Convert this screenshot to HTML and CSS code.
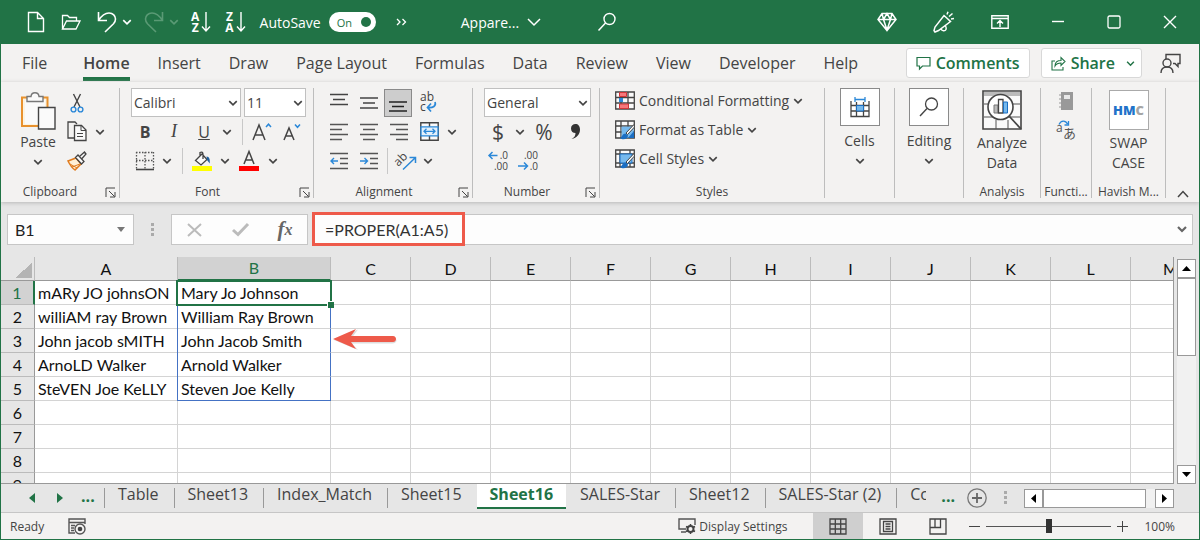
FILE: index.html
```html
<!DOCTYPE html>
<html lang="en">
<head>
<meta charset="utf-8">
<meta name="viewport" content="width=device-width, initial-scale=1">
<title>Spreadsheet</title>
<link rel="stylesheet" href="styles.css">
</head>
<body>
<svg class="defs" aria-hidden="true">
  <symbol id="chev" viewBox="0 0 8 8"><path d="M1 2.5 4 5.5 7 2.5" fill="none" stroke="currentColor" stroke-width="1.3"/></symbol>
  <symbol id="launch" viewBox="0 0 11 11"><path d="M1 10V1h9M4 4l5.500 5.500M10 5v5H5" fill="none" stroke="currentColor"/></symbol>
</svg>
<div class="window">

  <header class="titlebar">
    <div class="quick">
      <button class="tb-btn new" aria-label="New"><svg width="18" height="22" viewBox="0 0 18 22"><path d="M1.500 1.500h9l6 6v13h-15zM10.500 1.500v6h6" fill="none" stroke="currentColor" stroke-width="1.400"/></svg></button>
      <button class="tb-btn" aria-label="Open"><svg width="20" height="18" viewBox="0 0 20 18"><path d="M1.500 16V2.500h5l2 2h7V8M1.500 16 5.500 8h13.500l-4 8z" fill="none" stroke="currentColor" stroke-width="1.300"/></svg></button>
      <button class="tb-btn undo" aria-label="Undo"><svg width="20" height="22" viewBox="0 0 20 22"><path d="M1.500 1v8.500H10M1.500 9.500C5 4 8 2 12 2c4 0 6.500 3 6.500 6 0 2-.8 3.500-2 4.800L8 21" fill="none" stroke="currentColor" stroke-width="1.600"/></svg></button>
      <button class="tb-btn hist" aria-label="Undo history"><svg width="10" height="10"><use href="#chev"/></svg></button>
      <button class="tb-btn dim undo" aria-label="Redo" disabled><svg width="20" height="22" viewBox="0 0 20 22"><path d="M18.500 1v8.500H10M18.500 9.500C15 4 12 2 8 2 4 2 1.500 5 1.500 8c0 2 .8 3.500 2 4.800L12 21" fill="none" stroke="currentColor" stroke-width="1.600"/></svg></button>
      <button class="tb-btn dim hist" aria-label="Redo history" disabled><svg width="10" height="10"><use href="#chev"/></svg></button>
      <button class="tb-btn sort" aria-label="Sort A to Z"><span class="stack"><b>A</b><b>Z</b></span><svg width="10" height="22" viewBox="0 0 10 22"><path d="M5 1v19M1 15.500l4 4.500 4-4.500" fill="none" stroke="currentColor" stroke-width="1.400"/></svg></button>
      <button class="tb-btn sort" aria-label="Sort Z to A"><span class="stack"><b>Z</b><b>A</b></span><svg width="10" height="22" viewBox="0 0 10 22"><path d="M5 1v19M1 15.500l4 4.500 4-4.500" fill="none" stroke="currentColor" stroke-width="1.400"/></svg></button>
      <label class="autosave">AutoSave <span class="switch"><input type="checkbox" checked><span>On</span></span></label>
      <button class="tb-btn overflow" aria-label="More commands"><svg width="11" height="8" viewBox="0 0 11 8"><path d="M1 1l3 3-3 3M6.500 1l3 3-3 3" fill="none" stroke="currentColor" stroke-width="1.300"/></svg></button>
      <button class="tb-btn filename">Appare... <svg width="14" height="8" viewBox="0 0 14 8"><path d="M1 1l6 6 6-6" fill="none" stroke="currentColor" stroke-width="1.500"/></svg></button>
      <button class="tb-btn" aria-label="Search"><svg width="20" height="20" viewBox="0 0 20 20"><circle cx="12.500" cy="7" r="5.500" fill="none" stroke="currentColor" stroke-width="1.400"/><path d="M8.500 11 1.500 18.500" stroke="currentColor" stroke-width="1.500"/></svg></button>
    </div>
    <div class="win-tools">
      <button class="tb-btn" aria-label="Premium"><svg width="20" height="20" viewBox="0 0 20 20"><path d="M5 1.500h10l4 6L10 18.500 1 7.500zM1 7.500h18M5 1.500 6.500 7.500 10 18l3.500-10.500L15 1.500M6.500 7.500 10 1.500l3.500 6" fill="none" stroke="currentColor" stroke-width="1.500"/></svg></button>
      <button class="tb-btn" aria-label="Coming soon"><svg width="22" height="22" viewBox="0 0 22 22"><path d="M11 4.500l6.500 6L5.500 19.500l-3.500 1.500L1 19.500l1-3.500zM8 18c1 2 4 2.500 5 .5.500-1 .3-2-.5-3.500M14 3.500 15 .8M16 5.500l3.500-3M18 8l3-.5" fill="none" stroke="currentColor" stroke-width="1.500"/></svg></button>
      <button class="tb-btn" aria-label="Ribbon display"><svg width="18" height="14" viewBox="0 0 18 14"><path d="M.8.800h16.400v12.400H.8zM.8 3.500h16.400M9 12V6M6 8.500 9 5.500l3 3" fill="none" stroke="currentColor" stroke-width="1.400"/></svg></button>
      <button class="tb-btn win" aria-label="Minimize"><svg width="14" height="14" viewBox="0 0 14 14"><path d="M1 6.500h12" stroke="currentColor" stroke-width="1.400"/></svg></button>
      <button class="tb-btn win" aria-label="Maximize"><svg width="14" height="14" viewBox="0 0 14 14"><rect x="1" y="1" width="12" height="12" rx="1.500" fill="none" stroke="currentColor" stroke-width="1.300"/></svg></button>
      <button class="tb-btn win" aria-label="Close"><svg width="14" height="14" viewBox="0 0 14 14"><path d="M1 1l12 12M13 1 1 13" stroke="currentColor" stroke-width="1.400"/></svg></button>
    </div>
  </header>

  <div class="menubar">
    <nav class="tabs">
      <a href="#file" class="file">File</a><a href="#home" class="active">Home</a><a href="#insert">Insert</a><a href="#draw">Draw</a><a href="#layout">Page Layout</a><a href="#formulas">Formulas</a><a href="#data">Data</a><a href="#review">Review</a><a href="#view">View</a><a href="#developer">Developer</a><a href="#help">Help</a>
    </nav>
    <div class="menu-actions">
      <button class="pill"><svg width="15" height="14" viewBox="0 0 15 14"><path d="M1 1.500h13v8.500H6.500l-3 3V10H1z" fill="none" stroke="currentColor" stroke-width="1.200"/></svg>Comments</button>
      <button class="pill share"><svg width="15" height="15" viewBox="0 0 15 15"><path d="M4 5H1v9h11v-3M4 10c0-4 2.500-5.500 6-5.500V1.500l4 4-4 4V7C7.500 7 5.500 7.500 4 10z" fill="none" stroke="currentColor" stroke-width="1.100"/></svg>Share<svg class="caret" width="9" height="9"><use href="#chev"/></svg></button>
      <button class="plain" aria-label="Feedback"><svg width="21" height="21" viewBox="0 0 21 21"><path d="M6 6V1.500h14v9h-2v3l-3-3h-2M1 20c0-4 2.500-6 6-6s6 2 6 6" fill="none" stroke="currentColor" stroke-width="1.400"/><circle cx="7" cy="10" r="4" fill="none" stroke="currentColor" stroke-width="1.400"/></svg></button>
    </div>
  </div>

  <main class="ribbon">
    <section class="group clipboard">
      <div class="body">
        <button class="big"><svg width="36" height="38" viewBox="0 0 36 38"><path d="M2 5.500h25.500V34H2z" fill="#fdf3e0" stroke="#e8912d" stroke-width="2"/><path d="M5 8h20v24H5z" fill="#fafafa"/><path d="M7 4.500h4c.5-5 7.500-5 8 0h4v5H7z" fill="#fafafa" stroke="#777" stroke-width="1.400"/><path d="M18.500 15.500H35V37H18.500z" fill="#fafafa" stroke="#444" stroke-width="1.400"/></svg><span>Paste</span><svg class="chev"><use href="#chev"/></svg></button>
        <div class="rows clip-rows">
          <div class="row"><button class="tool w30" aria-label="Cut"><svg width="14" height="20" viewBox="0 0 14 20"><path d="M3.500 1 10 14M10.500 1 4 14" fill="none" stroke="#444" stroke-width="1.400"/><circle cx="3.500" cy="16.500" r="2.400" fill="none" stroke="#2b88d8" stroke-width="1.400"/><circle cx="10.500" cy="16.500" r="2.400" fill="none" stroke="#2b88d8" stroke-width="1.400"/></svg></button></div>
          <div class="row"><button class="tool w30" aria-label="Copy"><svg width="20" height="21" viewBox="0 0 20 21"><path d="M8 1H1v16h6M1 1h7l2 2" fill="none" stroke="#444" stroke-width="1.300"/><path d="M7.500 4.500h7l4.500 4.500v10.500H7.500z" fill="#fafafa" stroke="#444" stroke-width="1.300"/><path d="M14 5v4.500h5M10 12.500h6M10 15.500h6" fill="none" stroke="#444"/></svg></button><button class="tool w16" aria-label="Copy options"><svg class="chev"><use href="#chev"/></svg></button></div>
          <div class="row"><button class="tool w30" aria-label="Format painter"><svg width="20" height="20" viewBox="0 0 20 20"><path d="M1 10 9 7l5 6-6 6C5 17 3 14 1 10z" fill="#fff0d6" stroke="#e07b1e" stroke-width="1.500"/><path d="M3 13l7 4M5 16l8-3" stroke="#e07b1e"/><path d="M8.500 6.500 11 4l6 6.500-2.500 2.500zM13 5l4.500-4L19 3l-4 4.500" fill="#fafafa" stroke="#444" stroke-width="1.300"/></svg></button></div>
        </div>
      </div>
      <h2>Clipboard</h2><button class="launch" aria-label="Clipboard options"><svg><use href="#launch"/></svg></button>
    </section>

    <section class="group font">
      <div class="body"><div class="rows">
        <div class="row gap2"><span class="combo face"><select aria-label="Font"><option>Calibri</option></select><svg class="chev"><use href="#chev"/></svg></span><span class="combo size"><select aria-label="Font size"><option>11</option></select><svg class="chev"><use href="#chev"/></svg></span></div>
        <div class="row"><button class="tool w28 bold">B</button><button class="tool w30 italic">I</button><button class="tool w30 under">U</button><button class="tool w16" aria-label="Underline options"><svg class="chev"><use href="#chev"/></svg></button><i class="sep"></i>
          <button class="tool w30" aria-label="Grow font"><svg width="20" height="20" viewBox="0 0 20 20"><path d="M1 18 7 3l6 15M3 13h8" fill="none" stroke="#444" stroke-width="1.500"/><path d="M14 5l2.500-2.800L19 5" fill="none" stroke="#2b88d8" stroke-width="1.500"/></svg></button><button class="tool w30" aria-label="Shrink font"><svg width="18" height="20" viewBox="0 0 18 20"><path d="M1 18 6 6l5 12M3 14h6" fill="none" stroke="#444" stroke-width="1.500"/><path d="M12 2.500l2.500 2.800L17 2.500" fill="none" stroke="#2b88d8" stroke-width="1.500"/></svg></button></div>
        <div class="row"><button class="tool w28" aria-label="Borders"><svg width="20" height="20" viewBox="0 0 20 20"><path d="M1 1.500h18M1 9.500h18M1.500 1v17M10 1v17M18.500 1v17" fill="none" stroke="#555" stroke-dasharray="1.500 1.500" stroke-width="1.300"/><path d="M1 18.500h18" stroke="#444" stroke-width="1.600"/></svg></button><button class="tool w16" aria-label="Border options"><svg class="chev"><use href="#chev"/></svg></button><i class="sep"></i>
          <button class="tool w30" aria-label="Fill color"><svg width="20" height="20" viewBox="0 0 20 20"><path d="M3.500 9.500 10 3l5 5.500-6 5.500zM8 5V1.500c2-1 3 0 3 2V8" fill="#fafafa" stroke="#444" stroke-width="1.300"/><path d="M14.500 5.500c3 0 3.500 3 3.200 7L15 9z" fill="#1f5f9e"/><path d="M0 15h20v5H0z" fill="#ff0"/></svg></button><button class="tool w16" aria-label="Fill options"><svg class="chev"><use href="#chev"/></svg></button><button class="tool w32" aria-label="Font color"><svg width="20" height="22" viewBox="0 0 20 22"><path d="M5 14 10 1.500 15 14M7 10h6" fill="none" stroke="#444" stroke-width="1.500"/><path d="M0 16h20v5H0z" fill="#f00"/></svg></button><button class="tool w16" aria-label="Font color options"><svg class="chev"><use href="#chev"/></svg></button></div>
      </div></div>
      <h2>Font</h2><button class="launch" aria-label="Font options"><svg><use href="#launch"/></svg></button>
    </section>

    <section class="group align">
      <div class="body"><div class="rows">
        <div class="row"><button class="tool w30" aria-label="Top align"><svg width="18" height="18" viewBox="0 0 18 18"><path d="M0 .5h18M3 5.500h12M0 10.500h18" stroke="#444" stroke-width="1.300"/></svg></button><button class="tool w30" aria-label="Middle align"><svg width="18" height="18" viewBox="0 0 18 18"><path d="M0 4h18M3 9h12M0 14h18" stroke="#444" stroke-width="1.300"/></svg></button><button class="tool w28 on" aria-label="Bottom align"><svg width="18" height="18" viewBox="0 0 18 18"><path d="M0 8h18M3 12.500h12M0 17h18" stroke="#222" stroke-width="1.400"/></svg></button>
          <button class="tool w32" aria-label="Wrap text"><svg width="20" height="20" viewBox="0 0 20 20"><text x="2" y="8" class="ab">ab</text><text x="2" y="18" class="ab">c</text><path d="M17 9c1.500 4-2 6-7 5.500M13 10.500 9.500 14.500l3.500 4" fill="none" stroke="#2b88d8" stroke-width="1.700"/></svg></button></div>
        <div class="row"><button class="tool w30" aria-label="Align left"><svg width="18" height="18" viewBox="0 0 18 18"><path d="M0 1.500h18M0 6.500h12M0 11.500h18M0 16.500h12" stroke="#555" stroke-width="1.300"/></svg></button><button class="tool w30" aria-label="Center"><svg width="18" height="18" viewBox="0 0 18 18"><path d="M0 1.500h18M3 6.500h12M0 11.500h18M3 16.500h12" stroke="#555" stroke-width="1.300"/></svg></button><button class="tool w30" aria-label="Align right"><svg width="18" height="18" viewBox="0 0 18 18"><path d="M0 1.500h18M6 6.500h12M0 11.500h18M6 16.500h12" stroke="#555" stroke-width="1.300"/></svg></button>
          <button class="tool w30" aria-label="Merge"><svg width="19" height="19" viewBox="0 0 19 19"><path d="M.8.800h17.400v17.400H.8zM9.500 1v4M9.500 14v4" fill="#fafafa" stroke="#444" stroke-width="1.400"/><path d="M1 4.800h17v9H1z" fill="#e3f0fb" stroke="#2b88d8" stroke-width="1.300"/><path d="M4 9.300h11M6.500 6.800 4 9.300l2.500 2.500M12.500 6.800 15 9.300l-2.500 2.500" fill="none" stroke="#2b88d8" stroke-width="1.300"/></svg></button><button class="tool w16" aria-label="Merge options"><svg class="chev"><use href="#chev"/></svg></button></div>
        <div class="row"><button class="tool w30" aria-label="Decrease indent"><svg width="18" height="18" viewBox="0 0 18 18"><path d="M0 1.500h18M10 6.500h8M10 11.500h8M0 16.500h18" stroke="#555" stroke-width="1.300"/><path d="M8 9H1M4 6 1 9l3 3" fill="none" stroke="#2b88d8" stroke-width="1.400"/></svg></button><button class="tool w30" aria-label="Increase indent"><svg width="18" height="18" viewBox="0 0 18 18"><path d="M0 1.500h18M10 6.500h8M10 11.500h8M0 16.500h18" stroke="#555" stroke-width="1.300"/><path d="M0 9h7.500M4.500 6l3 3-3 3" fill="none" stroke="#2b88d8" stroke-width="1.400"/></svg></button><i class="sep tight"></i>
          <button class="tool w28" aria-label="Orientation"><svg width="22" height="20" viewBox="0 0 22 20"><text x="-1" y="12" class="ab" transform="rotate(-45 6 9)">ab</text><path d="M8 18.500 20 7M14.500 6.500H20.500V12" fill="none" stroke="#2b88d8" stroke-width="1.500"/></svg></button><button class="tool w16" aria-label="Orientation options"><svg class="chev"><use href="#chev"/></svg></button></div>
      </div></div>
      <h2>Alignment</h2><button class="launch" aria-label="Alignment options"><svg><use href="#launch"/></svg></button>
    </section>

    <section class="group number">
      <div class="body"><div class="rows">
        <div class="row"><span class="combo format"><select aria-label="Number format"><option>General</option></select><svg class="chev"><use href="#chev"/></svg></span></div>
        <div class="row"><button class="tool w28 sym">$</button><button class="tool w16" aria-label="Currency options"><svg class="chev"><use href="#chev"/></svg></button><button class="tool w32 sym">%</button><button class="tool w30" aria-label="Comma style"><svg width="11" height="17" viewBox="0 0 11 17"><path d="M1.500 16c3-1.500 4-3.500 4-6C3 10 1 8.500 1 5.500S3 1 5.500 1 10 3 10 6.500C10 11 7 15 1.500 16z" fill="#333"/></svg></button></div>
        <div class="row"><button class="tool w28" aria-label="Increase decimal"><svg width="20" height="22" viewBox="0 0 20 22"><text x="20" y="9" text-anchor="end" class="dec">.0</text><text x="20" y="20" text-anchor="end" class="dec">.00</text><path d="M9.500 5.500H1M4.500 2 1 5.500 4.500 9" fill="none" stroke="#2b88d8" stroke-width="1.500"/></svg></button><button class="tool w32" aria-label="Decrease decimal"><svg width="20" height="22" viewBox="0 0 20 22"><text x="20" y="9" text-anchor="end" class="dec">.00</text><text x="20" y="20" text-anchor="end" class="dec">.0</text><path d="M0 16h9.500M6 12.500l3.500 3.500L6 19.500" fill="none" stroke="#2b88d8" stroke-width="1.500"/></svg></button></div>
      </div></div>
      <h2>Number</h2><button class="launch" aria-label="Number options"><svg><use href="#launch"/></svg></button>
    </section>

    <section class="group styles">
      <div class="body"><div class="rows">
        <button class="line"><svg width="20" height="20" viewBox="0 0 20 20"><path d="M.7 1h18.600v17H.7zM1 6.500h18M1 12h18M6 1v17M13 1v17" fill="#fafafa" stroke="#444" stroke-width="1.300"/><path d="M4.500 1.500h7v4h-7zM4.500 13h9v4.500h-9z" fill="#f4787c" stroke="#d13438"/><path d="M4 7h4v4H4z" fill="#2b88d8"/></svg>Conditional Formatting<svg class="chev"><use href="#chev"/></svg></button>
        <button class="line"><svg width="20" height="20" viewBox="0 0 20 20"><path d="M.7 1h18.600v17H.7zM1 6h18M1 12h18M6 1v17M13 1v17" fill="#fafafa" stroke="#444" stroke-width="1.300"/><path d="M6.600 6.600h12v11H6.600z" fill="#76b9ed"/><path d="M13 18h6v-7z" fill="#1b6ec2"/><path d="M19 4.500 11 13l1.500 1.500L19.500 7z" fill="#fff" stroke="#444"/><path d="M10.500 13.500c-3 0-3 3-5.500 4.500 3 2.500 8 1 8-2.500z" fill="#1b6ec2"/></svg>Format as Table<svg class="chev"><use href="#chev"/></svg></button>
        <button class="line"><svg width="20" height="20" viewBox="0 0 20 20"><path d="M.7 1h18.600v17H.7zM1 5h18M1 14h18M5 1v17M15 1v17" fill="#fafafa" stroke="#444" stroke-width="1.300"/><path d="M5 5h12v9H5z" fill="#76b9ed" stroke="#1b6ec2"/><path d="M19 4.500 11 13l1.500 1.500L19.500 7z" fill="#fff" stroke="#444"/><path d="M10.500 13.500c-3 0-3 3-5.500 4.500 3 2.500 8 1 8-2.500z" fill="#1b6ec2"/></svg>Cell Styles<svg class="chev"><use href="#chev"/></svg></button>
      </div></div>
      <h2>Styles</h2>
    </section>

    <section class="group">
      <div class="body"><button class="big"><span class="tile"><svg width="20" height="22" viewBox="0 0 20 22"><path d="M1 5v15.500h18V5M1 9.500h18M1 15h18M6.500 6v14M13.500 6v14" fill="none" stroke="#444" stroke-width="1.300"/><path d="M6.500 9.500h7V15h-7z" fill="#76b9ed" stroke="#1b6ec2"/><path d="M5 1v5M15 1v5M5 3.500h10" fill="none" stroke="#2b88d8" stroke-width="1.300"/></svg></span><span>Cells</span><svg class="chev"><use href="#chev"/></svg></button></div>
    </section>
    <section class="group">
      <div class="body"><button class="big"><span class="tile"><svg width="20" height="20" viewBox="0 0 20 20"><circle cx="12.500" cy="7" r="6" fill="none" stroke="#444" stroke-width="1.300"/><path d="M8 11.500 1 19" stroke="#444" stroke-width="1.400"/></svg></span><span>Editing</span><svg class="chev"><use href="#chev"/></svg></button></div>
    </section>
    <section class="group">
      <div class="body"><button class="big two"><svg width="40" height="40" viewBox="0 0 40 40"><path d="M1 1h38v38H1z" fill="#fafafa" stroke="#444" stroke-width="1.600"/><path d="M2 2h36v4H2z" fill="#bbb"/><path d="M2 14h36M2 27h36M14 30v9M26 30v9" stroke="#555"/><circle cx="18.500" cy="17" r="12.500" fill="#fff" stroke="#444" stroke-width="1.600"/><path d="M12 15h4v8h-4z" fill="#bbb" stroke="#777"/><path d="M16.500 9.500h4.500V23h-4.500z" fill="#fff" stroke="#444" stroke-width="1.300"/><path d="M21.500 12h4v11h-4z" fill="#76b9ed" stroke="#1b6ec2"/><path d="M27.500 26.500 39 39" stroke="#444" stroke-width="1.800"/></svg><span>Analyze<br>Data</span></button></div>
      <h2>Analysis</h2>
    </section>
    <section class="group func">
      <div class="body"><div class="rows">
        <button class="line" aria-label="Reference"><svg width="16" height="20" viewBox="0 0 16 20"><path d="M3 1h12v18H3z" fill="#999"/><path d="M1 4h2M1 8h2M1 12h2M1 16h2" stroke="#999"/><path d="M6 4h6v4H6z" fill="#e8e8e8"/></svg></button>
        <button class="line" aria-label="Translate"><svg width="20" height="20" viewBox="0 0 20 20"><text x="0" y="12" class="lat">a</text><text x="7" y="18" class="cjk">あ</text><path d="M3 4.500C5 0 9.500 0 11.500 4M12.500 1v4h-4" fill="none" stroke="#2b88d8" stroke-width="1.300"/></svg></button>
      </div></div>
      <h2>Functi...</h2>
    </section>
    <section class="group">
      <div class="body"><button class="big two"><span class="hmc">HM<i>C</i></span><span>SWAP<br>CASE</span></button></div>
      <h2>Havish M...</h2>
    </section>
    <button class="collapse" aria-label="Collapse ribbon"><svg width="12" height="8" viewBox="0 0 12 8"><path d="M1 7l5-5.500L11 7" fill="none" stroke="#444" stroke-width="1.500"/></svg></button>
  </main>

  <div class="formula-bar">
    <label class="name-box"><input value="B1" aria-label="Name box"><svg width="8" height="5" viewBox="0 0 8 5"><path d="M0 0h8L4 5z" fill="#777"/></svg></label>
    <span class="dots"></span>
    <div class="fx-tools">
      <button aria-label="Cancel"><svg width="16" height="14" viewBox="0 0 16 14"><path d="M1 1l13 12M14 1 1 13" stroke="#bbb" stroke-width="2"/></svg></button>
      <button aria-label="Enter"><svg width="17" height="13" viewBox="0 0 17 13"><path d="M1 7l5 4.500L16 1" fill="none" stroke="#bbb" stroke-width="3"/></svg></button>
      <button class="fx">f<sub>x</sub></button>
    </div>
    <div class="formula"><input value="=PROPER(A1:A5)" aria-label="Formula"><span class="callout"></span><svg width="10" height="7" viewBox="0 0 10 7"><path d="M1 1l4 4 4-4" fill="none" stroke="#666" stroke-width="2.200"/></svg></div>
  </div>

  <div class="sheet">
    <div class="grid-area">
      <table>
        <colgroup><col class="c-head"><col class="c-a"><col class="c-b"><col span="10" class="c"><col class="c"></colgroup>
        <thead><tr><th class="corner"></th><th>A</th><th class="sel">B</th><th>C</th><th>D</th><th>E</th><th>F</th><th>G</th><th>H</th><th>I</th><th>J</th><th>K</th><th>L</th><th>M</th></tr></thead>
        <tbody>
          <tr><th class="sel">1</th><td>mARy JO johnsON</td><td class="spill current">Mary Jo Johnson<span class="cursor"></span></td><td></td><td></td><td></td><td></td><td></td><td></td><td></td><td></td><td></td><td></td><td></td></tr>
          <tr><th>2</th><td>williAM ray Brown</td><td class="spill">William Ray Brown</td><td></td><td></td><td></td><td></td><td></td><td></td><td></td><td></td><td></td><td></td><td></td></tr>
          <tr><th>3</th><td>John jacob sMITH</td><td class="spill">John Jacob Smith</td><td class="pointer"><svg width="66" height="24" viewBox="0 0 66 24"><path d="M2 12 26 1.500 20 9.500h40c6 0 6 6 0 6H20L26 22z" fill="#aaa" opacity=".4"/><path d="M1 11 24 1l-5 7h42c4 0 4 6 0 6H19l5 7z" fill="#ee5a4a"/></svg></td><td></td><td></td><td></td><td></td><td></td><td></td><td></td><td></td><td></td><td></td></tr>
          <tr><th>4</th><td>ArnoLD Walker</td><td class="spill">Arnold Walker</td><td></td><td></td><td></td><td></td><td></td><td></td><td></td><td></td><td></td><td></td><td></td></tr>
          <tr><th>5</th><td>SteVEN Joe KeLLY</td><td class="spill last">Steven Joe Kelly</td><td></td><td></td><td></td><td></td><td></td><td></td><td></td><td></td><td></td><td></td><td></td></tr>
          <tr><th>6</th><td></td><td></td><td></td><td></td><td></td><td></td><td></td><td></td><td></td><td></td><td></td><td></td><td></td></tr>
          <tr><th>7</th><td></td><td></td><td></td><td></td><td></td><td></td><td></td><td></td><td></td><td></td><td></td><td></td><td></td></tr>
          <tr><th>8</th><td></td><td></td><td></td><td></td><td></td><td></td><td></td><td></td><td></td><td></td><td></td><td></td><td></td></tr>
          <tr><th>9</th><td></td><td></td><td></td><td></td><td></td><td></td><td></td><td></td><td></td><td></td><td></td><td></td><td></td></tr>
        </tbody>
      </table>
    </div>
    <div class="vscroll">
      <button aria-label="Scroll up"><svg width="9" height="5" viewBox="0 0 9 5"><path d="M0 5h9L4.500 0z"/></svg></button>
      <span class="thumb"></span><span class="track"></span>
      <button aria-label="Scroll down"><svg width="9" height="5" viewBox="0 0 9 5"><path d="M0 0h9L4.500 5z"/></svg></button>
    </div>
  </div>

  <div class="sheet-tabs">
    <div class="nav">
      <button aria-label="Previous sheet"><svg width="6" height="10" viewBox="0 0 6 10"><path d="M6 0v10L0 5z"/></svg></button>
      <button aria-label="Next sheet"><svg width="6" height="10" viewBox="0 0 6 10"><path d="M0 0v10l6-5z"/></svg></button>
      <button class="ell">...</button>
    </div>
    <div class="list">
      <button>Table</button><button>Sheet13</button><button>Index_Match</button><button>Sheet15</button><button class="active">Sheet16</button><button>SALES-Star</button><button>Sheet12</button><button>SALES-Star (2)</button><button class="cut">Co</button>
    </div>
    <button class="ell more">...</button>
    <button class="add" aria-label="New sheet"><svg width="20" height="20" viewBox="0 0 20 20"><circle cx="10" cy="10" r="9.200" fill="none" stroke="#777" stroke-width="1.300"/><path d="M10 5v10M5 10h10" stroke="#666" stroke-width="1.800"/></svg></button>
    <span class="dots"></span>
    <div class="hscroll">
      <button aria-label="Scroll left"><svg width="5" height="9" viewBox="0 0 5 9"><path d="M5 0v9L0 4.500z"/></svg></button>
      <span class="thumb"></span><span class="track"></span>
      <button aria-label="Scroll right"><svg width="5" height="9" viewBox="0 0 5 9"><path d="M0 0v9l5-4.500z"/></svg></button>
    </div>
  </div>

  <footer class="status">
    <span>Ready</span>
    <button class="macro" aria-label="Record macro"><svg width="18" height="17" viewBox="0 0 18 17"><path d="M17 6V1H1v14h6M1 4.500h16M3 7.500h4M3 10h3M3 12.500h3" fill="none" stroke="#555" stroke-width="1.400"/><circle cx="12" cy="11" r="5" fill="#f3f2f1" stroke="#555" stroke-width="1.400"/><circle cx="12" cy="11" r="2.300" fill="#444"/></svg></button>
    <button class="display"><svg width="18" height="16" viewBox="0 0 18 16"><path d="M17 7V1H1v10h7M3 14h5" fill="none" stroke="#555" stroke-width="1.400"/><circle cx="12.500" cy="11" r="3" fill="none" stroke="#444" stroke-width="2"/><path d="M12.500 6v2M12.500 14v2M8 8.500l2 1M15 12.500l2 1M8 13.500l2-1M15 9.500l2-1" stroke="#444" stroke-width="1.500"/></svg>Display Settings</button>
    <div class="views">
      <button class="on" aria-label="Normal view"><svg width="18" height="17" viewBox="0 0 18 17"><path d="M1 1h16v15H1zM1 6h16M1 11h16M6.300 1v15M11.700 1v15" fill="none" stroke="#444" stroke-width="1.300"/></svg></button>
      <button aria-label="Page layout view"><svg width="18" height="17" viewBox="0 0 18 17"><path d="M1 1h16v15H1zM4.500 3.500h9v10h-9zM6.500 6h5M6.500 8.500h5M6.500 11h5" fill="none" stroke="#444" stroke-width="1.300"/></svg></button>
      <button aria-label="Page break view"><svg width="18" height="17" viewBox="0 0 18 17"><path d="M1 1h16v15H1zM1 9.500h10.500V1M6 1v8.500" fill="none" stroke="#444" stroke-width="1.300"/></svg></button>
    </div>
    <div class="zoom"><button aria-label="Zoom out"><svg width="11" height="11" viewBox="0 0 11 11"><path d="M0 5.500h11" stroke="#444"/></svg></button><input type="range" min="0" max="100" value="50" aria-label="Zoom"><button aria-label="Zoom in"><svg width="11" height="11" viewBox="0 0 11 11"><path d="M0 5.500h11M5.500 0v11" stroke="#444"/></svg></button><span class="pctv">100%</span></div>
  </footer>
</div>
</body>
</html>
```
FILE: styles.css
```css
* { box-sizing: border-box; }
body {
  margin: 0;
  font-family: "Open Sans", "Noto Sans", sans-serif;
  font-size: 14px;
  color: #444;
}
button, input, select { font: inherit; color: inherit; margin: 0; padding: 0; border: 0; background: none; border-radius: 0; }
button { display: inline-flex; align-items: center; justify-content: center; }
svg { flex: none; display: block; overflow: visible; }
h2 { margin: 0; font-weight: 400; }
.defs { position: absolute; width: 0; height: 0; }

.window {
  display: flex;
  flex-direction: column;
  height: 100vh;
  min-height: 480px;
  border: 1px solid #217346;
  border-top: 0;
  background: #e6e6e6;
  overflow: hidden;
}

/* title bar */
.titlebar {
  display: flex;
  justify-content: space-between;
  align-items: center;
  height: 44px;
  flex: none;
  padding: 0 22px 0 26px;
  background: #217346;
  color: #fff;
}
.quick, .win-tools { display: flex; align-items: center; }
.quick .tb-btn { margin-right: 16px; }
.quick .undo { margin-right: 5px; }
.quick .hist { margin-right: 12px; }
.quick .dim { color: #5a9a75; }
.quick .sort { margin-right: 14px; gap: 2px; }
.stack { display: grid; font-size: 12px; line-height: 11px; }
.win-tools { gap: 36px; }
.win { margin-left: 6px; }
.autosave { display: flex; align-items: center; gap: 8px; margin-right: 20px; }
.switch {
  position: relative;
  display: inline-flex;
  align-items: center;
  width: 47px;
  height: 20px;
  padding-left: 8px;
  border-radius: 10px;
  background: #fff;
  color: #217346;
  font-size: 11px;
}
.switch input {
  position: absolute;
  right: 5px;
  width: 10px;
  height: 10px;
  appearance: none;
  border-radius: 50%;
  background: #217346;
}
.quick .overflow { margin-right: 54px; }
.quick .filename { margin-right: 56px; gap: 8px; }

/* menu tabs */
.menubar { display: flex; justify-content: space-between; background: #f3f2f1; height: 38px; flex: none; padding: 0 18px 0 21px; }
.tabs { display: flex; align-items: flex-start; gap: 28px; padding-top: 6px; font-size: 16px; }
.tabs a { color: #444; text-decoration: none; line-height: 27px; border-bottom: 4px solid transparent; white-space: nowrap; }
.tabs .file { margin-right: 8px; }
.tabs .active { font-weight: 600; border-color: #217346; }
.menu-actions { display: flex; align-items: center; gap: 11px; }
.pill {
  gap: 5px;
  height: 30px;
  padding: 0 9px;
  border: 1px solid #d8d8d8;
  border-radius: 3px;
  background: #fff;
  color: #217346;
  font-size: 16px;
  font-weight: 600;
}
.pill .caret { margin-left: 6px; }
.pill.share { padding: 0 6px 0 9px; }
.plain { margin-left: 7px; }

/* ribbon */
.ribbon {
  display: grid;
  grid-template-columns: 119px 194px 159px 127px 225px 70px 69px 77px 51px 74px 1fr;
  padding-top: 6px;
  height: 120px;
  flex: none;
  background: #f3f2f1;
  box-shadow: 0 1px 4px #b8b8b8;
}
.group {
  position: relative;
  display: flex;
  flex-direction: column;
  justify-content: space-between;
  height: 110px;
  border-right: 1px solid #bdbdbd;
}
.group h2 { font-size: 12px; line-height: 12px; text-align: center; white-space: nowrap; }
.group .launch { position: absolute; right: 3px; bottom: 0; }
.launch svg { width: 11px; height: 11px; }
.body { display: flex; justify-content: center; flex: 1; }
.font .body, .align .body, .number .body, .styles .body, .clipboard .body { justify-content: flex-start; }
.font .body { padding-left: 11px; }
.align .body { padding-left: 10px; }
.number .body { padding-left: 11px; }
.styles .body { padding-left: 15px; }
.clipboard .body { padding-left: 19px; }
.clipboard h2 { padding-right: 20px; }
.font h2, .align h2, .number h2 { padding-right: 18px; }
.rows { display: flex; flex-direction: column; }
.row { display: flex; align-items: center; height: 29px; }
.gap2 { gap: 3px; }
.chev { width: 10px; height: 10px; }
.tool { height: 28px; }
.w16 { width: 16px; }
.w28 { width: 28px; }
.w30 { width: 30px; }
.w32 { width: 32px; }
.on { background: #cdcdcd; border: 1px solid #8a8a8a; }
.bold { font-weight: 700; font-size: 16px; }
.italic { font: italic 18px "Liberation Serif", serif; }
.under { text-decoration: underline; font-size: 16px; }
.sep { width: 1px; height: 26px; margin: 0 4px 0 7px; background: #c8c8c8; }
.sep.tight { margin: 0 4px 0 3px; }
.sym { font-size: 21px; }
.ab { font-size: 12px; fill: #444; }
.dec { font-size: 10px; fill: #444; }
.lat { font-size: 12px; fill: #555; }
.cjk { font: 13px "Noto Sans CJK JP", sans-serif; fill: #555; }
.combo { position: relative; display: flex; align-items: center; height: 29px; background: #fff; border: 1px solid #c0c0c0; }
.combo select { appearance: none; width: 100%; padding-left: 2px; }
.combo .chev { position: absolute; right: 2px; pointer-events: none; }
.face { width: 110px; }
.size { width: 62px; }
.format { width: 107px; }
.clip-rows { margin-left: 6px; }
.big { flex-direction: column; justify-content: flex-start; line-height: 20px; white-space: nowrap; }
.big .chev { margin-top: 5px; }
.clipboard .big { padding-top: 4px; gap: 2px; }
.clipboard .big .chev { margin-top: 3px; }
.tile { display: flex; align-items: center; justify-content: center; width: 40px; height: 38px; margin-bottom: 5px; background: #fff; border: 1px solid #8a8a8a; }
.two { padding-top: 2px; gap: 3px; }
.hmc { display: flex; align-items: center; justify-content: center; width: 40px; height: 40px; background: #fff; border: 1px solid #aaa; font-size: 13px; font-weight: 800; color: #2173c9; }
.hmc i { font-style: normal; color: #a5a5a5; }
.line { justify-content: flex-start; height: 29px; margin-top: -2px; margin-bottom: 2px; gap: 4px; white-space: nowrap; }
.func .line { justify-content: center; }
.collapse { align-self: end; padding-bottom: 4px; }

/* formula bar */
.formula-bar { display: flex; align-items: center; flex: none; height: 55px; padding: 0 6px; font-family: Lato, "Open Sans", sans-serif; font-size: 16px; color: #333; }
.formula-bar > div, .name-box { display: flex; align-items: center; height: 31px; background: #fdfdfd; border: 1px solid #c6c6c6; }
.name-box { width: 127px; padding: 0 8px 0 7px; }
.name-box input { flex: 1; min-width: 0; color: #222; }
.dots { width: 3px; height: 14px; margin: 0 17px; background: repeating-linear-gradient(#aaa 0 3px, transparent 3px 5px); }
.fx-tools { width: 137px; justify-content: space-around; margin-right: 5px; }
.fx { font: italic 700 21px "Liberation Serif", serif; color: #666; }
.fx sub { font-size: 16px; }
.formula { position: relative; flex: 1; padding: 0 5px 0 11px; }
.formula input { flex: 1; min-width: 0; }
.callout { position: absolute; left: -2px; top: -3px; width: 153px; height: 34px; border: 3px solid #ee5a4a; pointer-events: none; }

/* worksheet */
.sheet { display: flex; flex: 1; min-height: 0; }
.grid-area { flex: 1; min-width: 0; overflow: hidden; border-right: 1px solid #999; border-bottom: 1px solid #999; }
table { border-collapse: separate; border-spacing: 0; table-layout: fixed; width: 1210px; font-family: Lato, "Open Sans", sans-serif; font-size: 16px; color: #111; }
.c-head { width: 34px; }
.c-a { width: 143px; }
.c-b { width: 153px; }
.c { width: 80px; }
th, td { padding: 0; height: 24px; font-weight: 400; border-right: 1px solid #d4d4d4; border-bottom: 1px solid #d4d4d4; white-space: nowrap; line-height: 20px; }
td { padding-left: 3px; background: #fff; }
th { background: #e6e6e6; border-color: #bbb; }
thead th { border-bottom-color: #999; }
tbody th { border-right-color: #999; }
th.sel { background: #d2d2d2; color: #217346; }
thead .sel { border-bottom: 2px solid #217346; }
tbody .sel { border-right: 2px solid #217346; }
.corner { background: linear-gradient(135deg, transparent 50%, #b4b4b4 50%) 15px 5px / 16px 16px no-repeat #e6e6e6; }
.spill { border-right-color: #4472c4; box-shadow: -1px 0 #4472c4; }
.last { border-bottom-color: #4472c4; }
.current, .pointer { position: relative; }
.cursor { position: absolute; inset: -1px -2px -2px -2px; border: 2px solid #217346; }
.cursor::after { content: ""; position: absolute; right: -4px; bottom: -4px; width: 6px; height: 6px; background: #217346; border: 1px solid #fff; border-right: 0; border-bottom: 0; }
.pointer svg { position: absolute; left: 1px; top: -1px; }

/* scroll bars */
.vscroll { display: flex; flex-direction: column; width: 19px; margin: 2px 3px 0 3px; background: #f1f1f1; }
.vscroll button, .hscroll button { flex: none; width: 19px; height: 19px; background: #fff; border: 1px solid #999; }
.vscroll .thumb { flex: none; height: 78px; background: #fff; border: 1px solid #999; }
.track { flex: 1; }
.hscroll { display: flex; width: 150px; height: 19px; background: #f1f1f1; }
.hscroll .thumb { width: 103px; background: #fff; border: 1px solid #999; }

/* sheet tabs */
.sheet-tabs { display: flex; align-items: center; height: 29px; flex: none; padding-right: 25px; border-bottom: 1px solid #c6c6c6; }
.nav { display: flex; width: 103px; padding-left: 28px; gap: 22px; fill: #217346; }
.ell { color: #217346; font-weight: 700; font-size: 16px; line-height: 16px; padding-bottom: 4px; }
.nav .ell { margin-left: -4px; }
.list { display: flex; flex: 1; height: 29px; min-width: 0; overflow: hidden; font-size: 16px; }
.list button { position: relative; flex: none; height: 25px; padding: 0 15px 4px 14px; white-space: nowrap; }
.list button::before { content: ""; position: absolute; left: 0; top: 4px; height: 20px; border-left: 1px solid #999; }
.list .active { background: #fff; color: #217346; font-weight: 700; border-bottom: 2px solid #217346; padding: 0 13px 2px; }
.list .active::before, .list .active + button::before { display: none; }
.list .cut { flex: 0 0 30px; overflow: hidden; justify-content: flex-start; padding-right: 0; }
.more { margin: 0 12px 0 6px; }
.sheet-tabs .dots { margin: 0 17px; }

/* status bar */
.status { display: flex; align-items: center; height: 26px; flex: none; padding-left: 9px; padding-right: 24px; background: #f3f2f1; font-size: 12px; }
.macro { margin-left: 24px; }
.display { margin-left: auto; gap: 3px; }
.views { display: flex; height: 26px; margin-left: 26px; }
.views button { width: 50px; height: 26px; border: 0; }
.views .on { background: #cfcfcf; }
.zoom { display: flex; align-items: center; margin-left: 6px; }
.zoom input { width: 125px; height: 16px; margin: 0 6px; appearance: none; background: linear-gradient(#555, #555) center / 100% 1px no-repeat; }
.zoom input::-webkit-slider-thumb { appearance: none; width: 6px; height: 14px; background: #333; }
.pctv { margin-left: 16px; }
```
